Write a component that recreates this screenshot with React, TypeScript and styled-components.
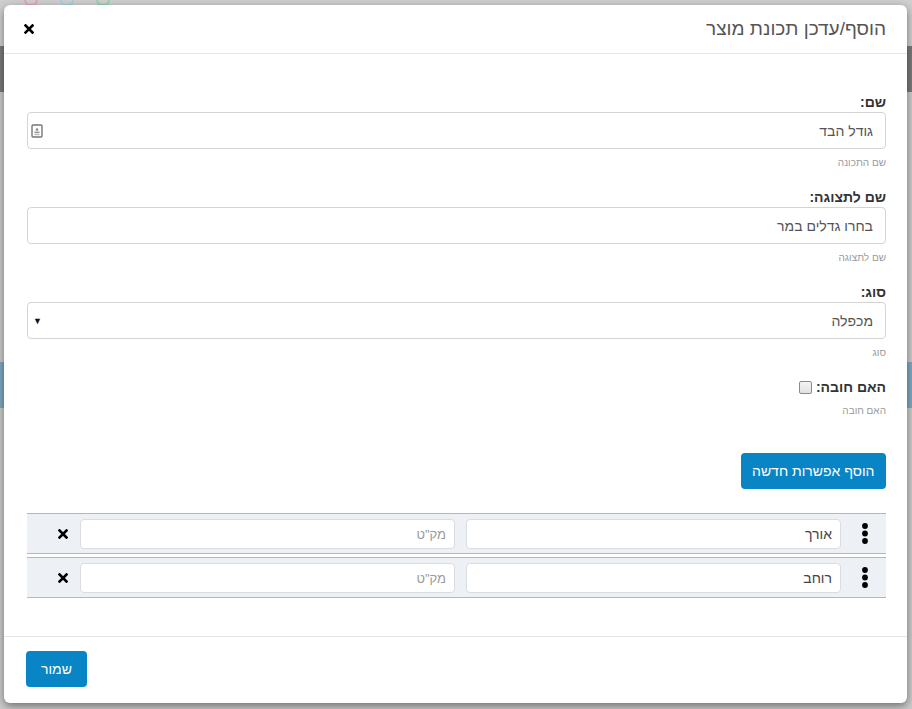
import React from "react";
import styled, { createGlobalStyle } from "styled-components";

const GlobalStyle = createGlobalStyle`
  html, body {
    margin: 0;
    padding: 0;
    background: #cbcbcb;
    font-family: "Liberation Sans", "DejaVu Sans", sans-serif;
  }
  * { box-sizing: border-box; }
`;

// the dimmed page behind the dialog
const Page = styled.div`
  position: relative;
  width: 912px;
  height: 709px;
  overflow: hidden;
  background: #cbcbcb;
  display: flex;
  flex-direction: column;
`;

const PageTop = styled.div`
  height: 46px;
  display: flex;
  gap: 22px;
  padding: 0 0 0 24px;
  background: #cfcfcf;
`;

const PageIcon = styled.span<{ $color: string }>`
  width: 14px;
  height: 8px;
  border: 2px solid ${(p) => p.$color};
  border-radius: 0 0 6px 6px;
  margin-top: -2px;
`;

const PageBar = styled.div`
  height: 46px;
  background: #7a7a7a;
`;

const PageGap = styled.div`
  height: 270px;
`;

const PageBand = styled.div`
  height: 46px;
  background: #7fa9c2;
`;

const Overlay = styled.div`
  position: absolute;
  inset: 0;
  padding: 5px 5px 6px 4px;
  display: flex;
`;

const Modal = styled.div`
  flex: 1;
  direction: rtl;
  background: #fff;
  border-radius: 6px;
  box-shadow: 0 3px 9px rgba(0, 0, 0, 0.45);
  display: flex;
  flex-direction: column;
`;

const Header = styled.div`
  height: 49px;
  padding: 0 21px 0 20px;
  border-bottom: 1px solid #e5e5e5;
  display: flex;
  align-items: center;
  justify-content: space-between;
`;

const Title = styled.h4`
  margin: 0;
  font-size: 19px;
  font-weight: normal;
  color: #555;
`;

const CloseButton = styled.button`
  border: 0;
  background: none;
  padding: 0;
  display: flex;
  cursor: pointer;
`;

const Body = styled.div`
  flex: 1;
  padding: 38px 21px 0 23px;
`;

const Group = styled.div`
  margin-bottom: 17px;
`;

const Label = styled.label`
  display: flex;
  align-items: center;
  gap: 4px;
  height: 20px;
  font-size: 14px;
  font-weight: bold;
  color: #333;
`;

const Field = styled.div`
  height: 37px;
  border: 1px solid #d4d4d4;
  border-radius: 4px;
  display: flex;
  align-items: center;
  padding: 0 12px 0 3px;
`;

const TextInput = styled.input`
  flex: 1;
  border: 0;
  outline: none;
  background: none;
  font-family: inherit;
  font-size: 14px;
  color: #555;
  padding: 0;
  direction: rtl;
`;

const NativeSelect = styled.select`
  flex: 1;
  appearance: none;
  border: 0;
  outline: none;
  background: none;
  font-family: inherit;
  font-size: 14px;
  color: #555;
  padding: 0;
`;

const Arrow = styled.span`
  font-size: 9px;
  color: #111;
  margin-left: 2px;
`;

const Help = styled.div`
  margin-top: 6px;
  font-size: 10px;
  color: #9a9a9a;
  line-height: 15px;
`;

const Check = styled.input`
  appearance: none;
  width: 13px;
  height: 13px;
  margin: 0;
  border: 1px solid #8c8c8c;
  border-radius: 2px;
  background: linear-gradient(#f4f4f4, #e2e2e2);
`;

const Actions = styled.div`
  display: flex;
  justify-content: flex-start;
  padding-top: 18px;
  margin-bottom: 24px;
`;

const BlueButton = styled.button<{ $wide?: boolean }>`
  height: 36px;
  padding: 0 ${(p) => (p.$wide ? "11.5px" : "15px")};
  border: 0;
  border-radius: 4px;
  background: #0985c6;
  color: #fff;
  font-family: inherit;
  font-size: 14px;
  cursor: pointer;
`;

const Options = styled.div`
  display: flex;
  flex-direction: column;
  gap: 3px;
`;

const OptionRow = styled.div`
  display: grid;
  grid-template-columns: 34px 1fr 1fr 42px;
  column-gap: 11px;
  align-items: center;
  height: 41px;
  background: #edf0f5;
  border-top: 1px solid #b3b8be;
  border-bottom: 1px solid #b3b8be;
`;

const Handle = styled.span`
  display: flex;
  justify-content: flex-start;
  padding-right: 18px;
`;

const RowInput = styled.input`
  height: 30px;
  min-width: 0;
  border: 1px solid #d9dde2;
  border-radius: 4px;
  background: #fff;
  padding: 0 8px;
  font-family: inherit;
  font-size: 14px;
  color: #444;
  outline: none;
  direction: rtl;
  &::placeholder {
    color: #9a9a9a;
    font-size: 13px;
  }
`;

const RemoveButton = styled.button`
  border: 0;
  background: none;
  padding: 0 1px 0 0;
  display: flex;
  justify-content: flex-start;
  cursor: pointer;
`;

const Footer = styled.div`
  border-top: 1px solid #e5e5e5;
  padding: 14px 22px 16px;
  display: flex;
  justify-content: flex-end;
`;

const Times = ({ size = 10 }: { size?: number }) => (
  <svg width={size} height={size} viewBox="0 0 10 10">
    <path d="M1.5 1.5 L8.5 8.5 M8.5 1.5 L1.5 8.5" stroke="#000" strokeWidth="2.6" strokeLinecap="square" />
  </svg>
);

const Dots = () => (
  <svg width="6" height="21" viewBox="0 0 6 21">
    <circle cx="3" cy="3" r="2.9" fill="#000" />
    <circle cx="3" cy="10.5" r="2.9" fill="#000" />
    <circle cx="3" cy="18" r="2.9" fill="#000" />
  </svg>
);

const CardIcon = () => (
  <svg width="12" height="14" viewBox="0 0 12 14">
    <rect x="1" y="1" width="10" height="12" fill="#fff" stroke="#777" strokeWidth="1.4" rx="1" />
    <circle cx="6" cy="5.5" r="1.3" fill="#888" />
    <rect x="3.5" y="7.5" width="5" height="1.6" fill="#999" />
    <rect x="3.5" y="9.8" width="5" height="1.4" fill="#bbb" />
  </svg>
);

const options = [{ name: "אורך" }, { name: "רוחב" }];

export default function App() {
  return (
    <Page>
      <GlobalStyle />
      <PageTop>
        <PageIcon $color="#e8a3ad" />
        <PageIcon $color="#9fd2df" />
        <PageIcon $color="#8fd6ab" />
      </PageTop>
      <PageBar />
      <PageGap />
      <PageBand />

      <Overlay>
        <Modal>
          <Header>
            <Title>הוסף/עדכן תכונת מוצר</Title>
            <CloseButton>
              <Times size={10} />
            </CloseButton>
          </Header>

          <Body>
            <Group>
              <Label>שם:</Label>
              <Field>
                <TextInput defaultValue="גודל הבד" />
                <CardIcon />
              </Field>
              <Help>שם התכונה</Help>
            </Group>

            <Group>
              <Label>שם לתצוגה:</Label>
              <Field>
                <TextInput defaultValue="בחרו גדלים במר" />
              </Field>
              <Help>שם לתצוגה</Help>
            </Group>

            <Group>
              <Label>סוג:</Label>
              <Field>
                <NativeSelect defaultValue="multi">
                  <option value="multi">מכפלה</option>
                </NativeSelect>
                <Arrow>▼</Arrow>
              </Field>
              <Help>סוג</Help>
            </Group>

            <Group>
              <Label>
                האם חובה:
                <Check type="checkbox" />
              </Label>
              <Help>האם חובה</Help>
            </Group>

            <Actions>
              <BlueButton $wide>הוסף אפשרות חדשה</BlueButton>
            </Actions>

            <Options>
              {options.map((o) => (
                <OptionRow key={o.name}>
                  <Handle>
                    <Dots />
                  </Handle>
                  <RowInput defaultValue={o.name} />
                  <RowInput placeholder='מק"ט' />
                  <RemoveButton>
                    <Times size={10} />
                  </RemoveButton>
                </OptionRow>
              ))}
            </Options>
          </Body>

          <Footer>
            <BlueButton>שמור</BlueButton>
          </Footer>
        </Modal>
      </Overlay>
    </Page>
  );
}
